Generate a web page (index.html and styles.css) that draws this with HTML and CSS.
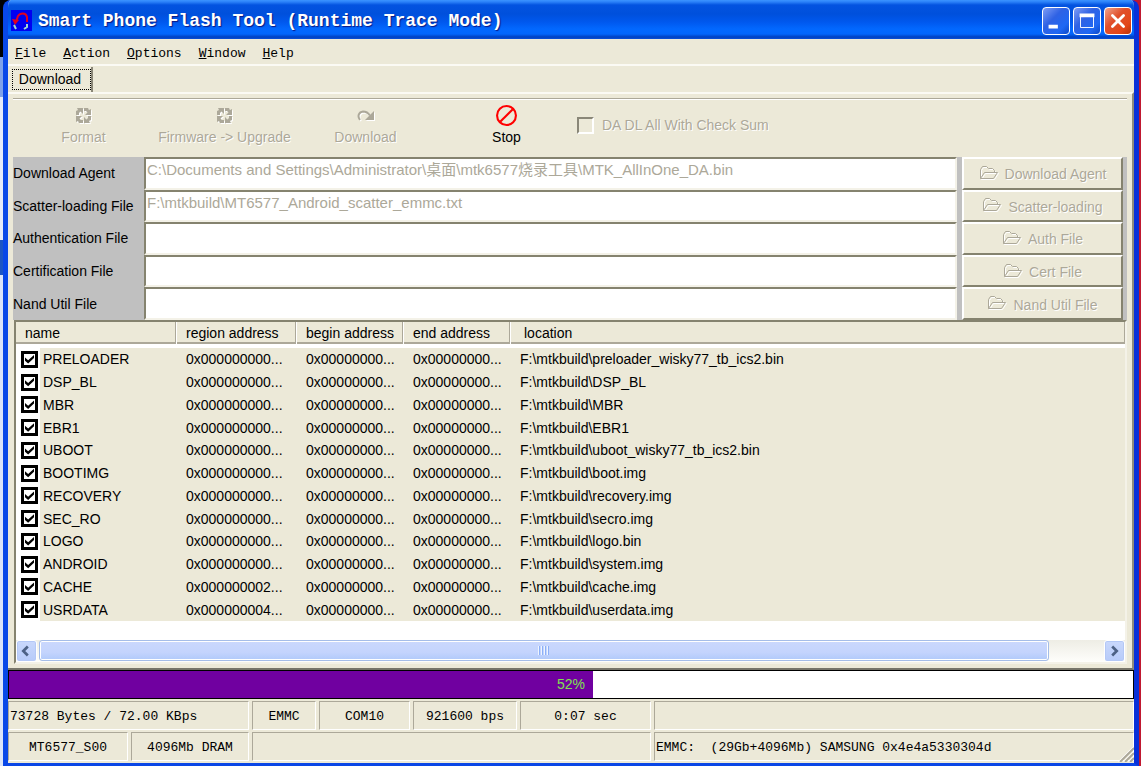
FILE: index.html
```html
<!DOCTYPE html>
<html lang="en">
  <head>
    <meta charset="UTF-8" />
    <meta name="viewport" content="width=device-width, initial-scale=1.0" />
    <title>Smart Phone Flash Tool</title>
    <link rel="stylesheet" href="styles.css">
  </head>
  <body>
    <svg class="defs" width="0" height="0" aria-hidden="true">
      <symbol id="cycle" viewBox="0 0 17 17">
        <path id="cycle-arrow" d="M2 1h6v6L5.500 4.500 4 6v2H1V4l2-1z" />
        <use href="#cycle-arrow" transform="rotate(90 8.500 8.500)" />
        <use href="#cycle-arrow" transform="rotate(180 8.500 8.500)" />
        <use href="#cycle-arrow" transform="rotate(270 8.500 8.500)" />
      </symbol>
      <symbol id="redo" viewBox="0 0 17 17">
        <path class="line thick" d="M3 13C0 9 2 5 6 4.500c3 0 5 1 7 4" />
        <path d="M17 4v9H8z" />
      </symbol>
      <symbol id="folder" viewBox="0 0 20 15">
        <path class="line" d="M1.500 13.500v-9l2-3h4l2 2h4l2 2v2M1.500 13.500l4-6h13l-4 6z" />
      </symbol>
    </svg>

    <div class="window">
      <header class="titlebar">
        <svg class="logo" viewBox="0 0 21 21">
          <rect width="21" height="21" fill="#0000f0" />
          <path d="M5 12L7 6c2-3 8-4 9 1v5" fill="none" stroke="#e00020" stroke-width="2" />
          <path d="M1 9l7 1-4 5z" fill="#e00020" />
          <path d="M3 15l2 4M16 14v3l-3 2" fill="none" stroke="#9fd8d0" stroke-width="2" />
        </svg>
        <h1>Smart Phone Flash Tool (Runtime Trace Mode)</h1>
        <div class="controls">
          <button class="control" aria-label="Minimize"><svg viewBox="0 0 28 28"><path d="M6 22h10v-4H6z" fill="#fff" /></svg></button>
          <button class="control" aria-label="Maximize"><svg viewBox="0 0 28 28"><path d="M7 8h14v13H7z" fill="none" stroke="#fff" /><path d="M6 6h16v4H6z" fill="#fff" /></svg></button>
          <button class="control close" aria-label="Close"><svg viewBox="0 0 28 28"><path d="M8 8l12 12M20 8L8 20" stroke="#fff" stroke-width="3" stroke-linecap="round" /></svg></button>
        </div>
      </header>

      <nav class="menu">
        <a href="#"><u>F</u>ile</a>
        <a href="#"><u>A</u>ction</a>
        <a href="#"><u>O</u>ptions</a>
        <a href="#"><u>W</u>indow</a>
        <a href="#"><u>H</u>elp</a>
      </nav>

      <div class="tabs">
        <button class="tab">Download</button>
      </div>

      <main class="page">
        <div class="toolbar">
          <button class="tool" disabled><svg><use href="#cycle" /></svg>Format</button>
          <button class="tool" disabled><svg><use href="#cycle" /></svg>Firmware -&gt; Upgrade</button>
          <button class="tool" disabled><svg><use href="#redo" /></svg>Download</button>
          <button class="tool"><svg class="stop" viewBox="0 0 20 20"><circle cx="10" cy="10" r="9" /><path d="M4 16L16 4" /></svg>Stop</button>
          <label class="checksum"><input type="checkbox" disabled />DA DL All With Check Sum</label>
        </div>

        <form class="files">
          <label for="agent">Download Agent</label>
          <input id="agent" type="text" value="C:\Documents and Settings\Administrator\桌面\mtk6577烧录工具\MTK_AllInOne_DA.bin" disabled />
          <button type="button" disabled><svg><use href="#folder" /></svg>Download Agent</button>
          <label for="scatter">Scatter-loading File</label>
          <input id="scatter" type="text" value="F:\mtkbuild\MT6577_Android_scatter_emmc.txt" disabled />
          <button type="button" disabled><svg><use href="#folder" /></svg>Scatter-loading</button>
          <label for="auth">Authentication File</label>
          <input id="auth" type="text" disabled />
          <button type="button" disabled><svg><use href="#folder" /></svg>Auth File</button>
          <label for="cert">Certification File</label>
          <input id="cert" type="text" disabled />
          <button type="button" disabled><svg><use href="#folder" /></svg>Cert File</button>
          <label for="nand">Nand Util File</label>
          <input id="nand" type="text" disabled />
          <button type="button" disabled><svg><use href="#folder" /></svg>Nand Util File</button>
        </form>

        <div class="list">
          <table>
            <colgroup>
              <col class="col-name" />
              <col class="col-region" />
              <col class="col-address" />
              <col class="col-address" />
              <col />
            </colgroup>
            <thead>
              <tr><th>name</th><th>region address</th><th>begin address</th><th>end address</th><th class="location">location</th></tr>
            </thead>
            <tbody>
              <tr><td><label><input type="checkbox" checked />PRELOADER</label></td><td>0x000000000...</td><td>0x00000000...</td><td>0x00000000...</td><td>F:\mtkbuild\preloader_wisky77_tb_ics2.bin</td></tr>
              <tr><td><label><input type="checkbox" checked />DSP_BL</label></td><td>0x000000000...</td><td>0x00000000...</td><td>0x00000000...</td><td>F:\mtkbuild\DSP_BL</td></tr>
              <tr><td><label><input type="checkbox" checked />MBR</label></td><td>0x000000000...</td><td>0x00000000...</td><td>0x00000000...</td><td>F:\mtkbuild\MBR</td></tr>
              <tr><td><label><input type="checkbox" checked />EBR1</label></td><td>0x000000000...</td><td>0x00000000...</td><td>0x00000000...</td><td>F:\mtkbuild\EBR1</td></tr>
              <tr><td><label><input type="checkbox" checked />UBOOT</label></td><td>0x000000000...</td><td>0x00000000...</td><td>0x00000000...</td><td>F:\mtkbuild\uboot_wisky77_tb_ics2.bin</td></tr>
              <tr><td><label><input type="checkbox" checked />BOOTIMG</label></td><td>0x000000000...</td><td>0x00000000...</td><td>0x00000000...</td><td>F:\mtkbuild\boot.img</td></tr>
              <tr><td><label><input type="checkbox" checked />RECOVERY</label></td><td>0x000000000...</td><td>0x00000000...</td><td>0x00000000...</td><td>F:\mtkbuild\recovery.img</td></tr>
              <tr><td><label><input type="checkbox" checked />SEC_RO</label></td><td>0x000000000...</td><td>0x00000000...</td><td>0x00000000...</td><td>F:\mtkbuild\secro.img</td></tr>
              <tr><td><label><input type="checkbox" checked />LOGO</label></td><td>0x000000000...</td><td>0x00000000...</td><td>0x00000000...</td><td>F:\mtkbuild\logo.bin</td></tr>
              <tr><td><label><input type="checkbox" checked />ANDROID</label></td><td>0x000000000...</td><td>0x00000000...</td><td>0x00000000...</td><td>F:\mtkbuild\system.img</td></tr>
              <tr><td><label><input type="checkbox" checked />CACHE</label></td><td>0x000000002...</td><td>0x00000000...</td><td>0x00000000...</td><td>F:\mtkbuild\cache.img</td></tr>
              <tr><td><label><input type="checkbox" checked />USRDATA</label></td><td>0x000000004...</td><td>0x00000000...</td><td>0x00000000...</td><td>F:\mtkbuild\userdata.img</td></tr>
            </tbody>
          </table>
          <div class="scrollbar">
            <button class="arrow" aria-label="Scroll left"><svg viewBox="0 0 20 20"><path d="M12 5l-5 5 5 5" /></svg></button>
            <div class="track"><div class="thumb"><span class="grip"></span></div></div>
            <button class="arrow" aria-label="Scroll right"><svg viewBox="0 0 20 20"><path d="M8 5l5 5-5 5" /></svg></button>
          </div>
        </div>
      </main>

      <div class="progress">
        <div class="bar" style="width: 52%"></div>
        <span class="percent">52%</span>
      </div>

      <footer class="status">
        <div class="status-row first">
          <span class="left">73728 Bytes / 72.00 KBps</span>
          <span>EMMC</span>
          <span>COM10</span>
          <span>921600 bps</span>
          <span>0:07 sec</span>
          <span></span>
        </div>
        <div class="status-row second">
          <span>MT6577_S00</span>
          <span>4096Mb DRAM</span>
          <span></span>
          <span class="left">EMMC:&nbsp; (29Gb+4096Mb) SAMSUNG 0x4e4a5330304d</span>
        </div>
        <svg class="resize" viewBox="0 0 16 16"><path d="M1 16L16 1M6 16L16 6M11 16l5-5" stroke="#fff" stroke-width="2" /><path d="M2 16L16 2M7 16l9-9M12 16l4-4" stroke="#aca899" stroke-width="2" /></svg>
      </footer>
    </div>
  </body>
</html>
```
FILE: styles.css
```css
* {
  box-sizing: border-box;
}
body {
  margin: 0;
  height: 100vh;
  display: flex;
  padding: 0 2px 0 3px;
  background: linear-gradient(to right, transparent 50%, #c01830 50%), linear-gradient(#000 57px, #7ea2ea 57px, #7ea2ea 97px, #e4ebfa 97px, #e4ebfa 240px, #1c56c4 240px, #1c56c4 275px, #dbe5fa 275px);
  font: 14px/16px "Liberation Sans", "Noto Sans CJK SC", sans-serif;
  color: #000;
}
button,
input {
  font: inherit;
  color: inherit;
  margin: 0;
}
.defs {
  position: absolute;
}
.window {
  flex: 1;
  min-width: 0;
  display: flex;
  flex-direction: column;
  border: solid #0a3fe0;
  border-width: 0 5px 3px;
  border-color: #0a3fe0 #0831d9 #0a46e6 #0848e8;
  border-radius: 8px 8px 0 0;
  background: #ece9d8;
  overflow: hidden;
}

/* title bar */
.titlebar {
  display: flex;
  align-items: center;
  height: 39px;
  margin: 0 -5px;
  padding: 2px 7px 0 8px;
  background: linear-gradient(#3c94ff 0, #2a80f8 2px, #0353e0 5px, #0050dc 14px, #0058ee 22px, #0268ff 29px, #0266fc 34px, #0040c0 37px, #0a50d8 39px);
}
.logo {
  width: 21px;
  height: 21px;
}
.titlebar h1 {
  flex: 1;
  margin: 0 0 0 6px;
  font: bold 18px/20px "Liberation Mono", monospace;
  color: #fff;
  text-shadow: 1px 1px 1px #0a1883;
  white-space: nowrap;
}
.controls {
  display: flex;
  gap: 3px;
}
.control {
  width: 28px;
  height: 28px;
  padding: 0;
  border: 1px solid #fff;
  border-radius: 4px;
  background: linear-gradient(135deg, #7f9df5, #2f62e4 40%, #1f68f4 75%, #0c48c8);
}
.control svg {
  display: block;
  width: 26px;
  height: 26px;
}
.close {
  background: linear-gradient(135deg, #f0a48c, #e0502c 40%, #e34618 75%, #b83208);
}

/* menu and tabs */
.menu {
  display: flex;
  gap: 17px;
  height: 27px;
  padding: 7px 7px 0;
  border-bottom: 2px solid #fbfaf4;
  font: 13px/16px "Liberation Mono", monospace;
}
.menu a {
  color: #000;
  text-decoration: none;
}
.tabs {
  display: flex;
  height: 26px;
  padding: 1px 0 0 2px;
}
.tab {
  padding: 0 5px 2px 4px;
  border: 0;
  border-right: 2px solid #8a8778;
  background: none;
  outline: 1px dotted #000;
  outline-offset: -3px;
  width: 83px;
}

/* download page */
.page {
  flex: 1;
  min-height: 0;
  display: flex;
  flex-direction: column;
  padding: 4px 5px 4px;
  border-top: 2px solid #fbfaf4;
  border-right: 2px solid #8f8c7c;
  border-bottom: 2px solid #77756a;
}
.toolbar {
  display: flex;
  height: 59px;
  border-top: 1px solid #aca899;
  box-shadow: inset 0 1px #fff;
}
.tool {
  width: 141px;
  display: flex;
  flex-direction: column;
  align-items: center;
  justify-content: center;
  gap: 5px;
  padding: 0 0 5px;
  border: 0;
  background: none;
}
.tool svg {
  width: 17px;
  height: 17px;
}
button:disabled,
.checksum {
  color: #aca899;
  text-shadow: 1px 1px #fff;
}
button:disabled svg {
  fill: #aca899;
  filter: drop-shadow(1px 1px #fff);
}
.line {
  fill: none;
  stroke: #aca899;
}
.thick {
  stroke-width: 2;
}
.tool .stop {
  width: 21px;
  height: 21px;
  margin-top: -2px;
  margin-bottom: -2px;
  fill: none;
  stroke: #f00;
  stroke-width: 2;
}
.checksum {
  display: flex;
  align-items: center;
  gap: 8px;
  padding-bottom: 6px;
}
.checksum input {
  appearance: none;
  width: 17px;
  height: 17px;
  border: 2px solid;
  border-color: #8a8778 #fff #fff #8a8778;
}

.files {
  display: grid;
  grid-template-columns: 131px minmax(0, 1fr) 161px;
  grid-auto-rows: 1fr;
  height: 163px;
  padding-right: 4px;
  background: #c0c0c0;
}
.files label {
  align-self: center;
  white-space: nowrap;
}
.files input {
  min-width: 0;
  margin-right: 5px;
  padding: 0 1px 6px;
  border: 2px solid;
  border-color: #85836f #f4f2e8 #f4f2e8 #85836f;
  background: #fff;
  color: #aca899;
  font-size: 15px;
}
.files button {
  display: flex;
  align-items: center;
  justify-content: center;
  gap: 6px;
  padding: 2px 0 0;
  border: 2px solid;
  border-color: #fff #85836f #85836f #fff;
  background: #ece9d8;
}
.files button svg {
  width: 20px;
  height: 15px;
  margin-top: -4px;
}

/* partition list */
.list {
  flex: 1;
  min-height: 0;
  display: flex;
  flex-direction: column;
  justify-content: space-between;
  margin-left: 1px;
  border: 2px solid;
  border-color: #85836f #f4f2e8 #f4f2e8 #85836f;
  background: #fff;
}
table {
  width: 100%;
  height: 299px;
  table-layout: fixed;
  border-collapse: separate;
  border-spacing: 0;
}
.col-name {
  width: 160px;
}
.col-region {
  width: 120px;
}
.col-address {
  width: 107px;
}
thead tr {
  height: 26px;
}
th {
  height: 26px;
  padding: 0 9px;
  font-weight: normal;
  text-align: left;
  white-space: nowrap;
  border-bottom: 4px solid #fff;
  background: linear-gradient(#aca899, #aca899) right / 1px 100% no-repeat, linear-gradient(#ece9d8 20px, #aca899 20px);
  background-clip: padding-box;
}
th + th {
  border-left: 1px solid #fff;
}
th.location {
  padding-left: 13px;
}
td {
  padding: 0 0 0 10px;
  background: #ece9d8;
  white-space: nowrap;
}
td:first-child {
  padding: 0 0 0 5px;
  background: linear-gradient(to right, #fff 24px, #ece9d8 24px);
}
td label {
  display: flex;
  align-items: center;
  gap: 5px;
}
td input {
  appearance: none;
  display: grid;
  place-items: center;
  width: 17px;
  height: 17px;
  border: 3px solid #000;
  background: #fff;
}
td input:checked::before {
  content: "";
  width: 9px;
  height: 9px;
  background: #000;
  clip-path: polygon(0 30%, 35% 60%, 100% 0, 100% 35%, 35% 95%, 0 65%);
}

.scrollbar {
  display: flex;
  gap: 2px;
  height: 22px;
  background: linear-gradient(#eeede5, #fefefb);
}
.arrow {
  width: 21px;
  padding: 0;
  border: 1px solid #fff;
  border-radius: 3px;
  background: linear-gradient(#c9d8fc, #b7cbf9);
  box-shadow: inset 0 0 0 1px #b4c8f6;
}
.arrow svg {
  display: block;
  width: 18px;
  height: 18px;
  fill: none;
  stroke: #4d6185;
  stroke-width: 3;
}
.track {
  flex: 1;
}
.thumb {
  display: flex;
  align-items: center;
  justify-content: center;
  width: 95%;
  height: 21px;
  border: 1px solid #a5bde8;
  border-radius: 3px;
  background: linear-gradient(#cad8fd, #c4d4fd 60%, #b0c9fa);
  box-shadow: inset 0 0 0 1px #fff;
}
.grip {
  width: 11px;
  height: 9px;
  background: repeating-linear-gradient(to right, #eef4fe 0, #eef4fe 1px, #8cb0f8 1px, #8cb0f8 2px, transparent 2px, transparent 3px);
}

/* progress */
.progress {
  position: relative;
  height: 29px;
  border: 1px solid #000;
  background: #fff;
}
.bar {
  height: 100%;
  background: #7000a0;
}
.percent {
  position: absolute;
  inset: 5px 0 0;
  text-align: center;
  color: #80e050;
}

/* status bar */
.status {
  position: relative;
  padding-top: 2px;
  font: 13px/29px "Liberation Mono", monospace;
}
.status-row {
  display: grid;
  gap: 3px;
  padding-bottom: 2px;
}
.first {
  grid-template-columns: 241px 64px 91px 104px 131px minmax(0, 1fr);
}
.second {
  grid-template-columns: 120px 118px 399px minmax(0, 1fr);
}
.status-row span {
  height: 29px;
  border: 1px solid;
  border-color: #aca899 #fff #fff #aca899;
  text-align: center;
  white-space: nowrap;
}
.status-row .left {
  padding-left: 1px;
  text-align: left;
}
.resize {
  position: absolute;
  right: 0;
  bottom: 1px;
  width: 16px;
  height: 16px;
}
```
